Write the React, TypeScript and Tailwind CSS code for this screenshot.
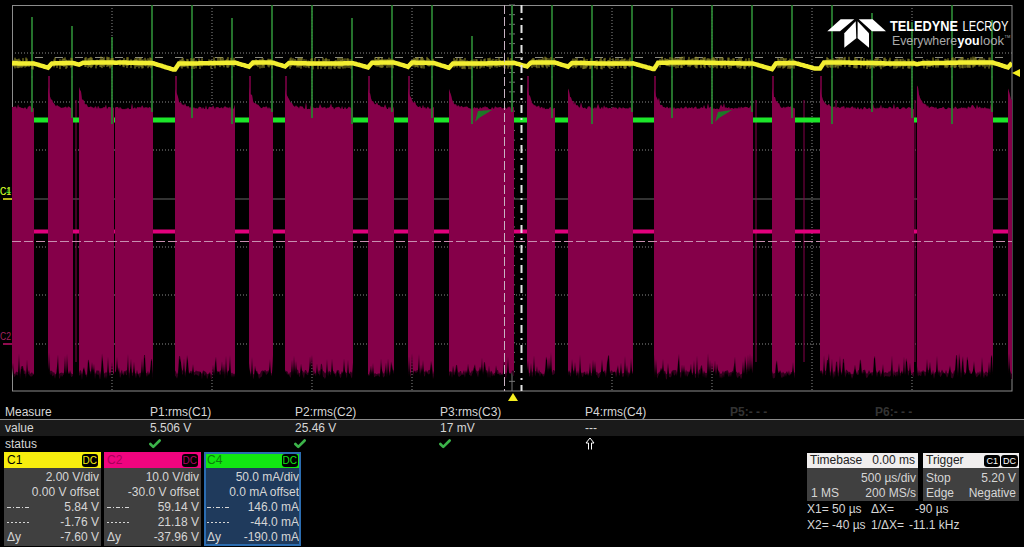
import { Check } from "lucide-react";

const bursts = [
  [12, 34], [48, 73], [79, 114], [115, 153], [175, 235], [249, 273], [285, 353], [368, 394],
  [408, 434], [449, 514], [527, 555], [568, 633], [654, 753], [772, 795], [820, 914], [917, 993], [1008, 1012],
];

const spikeTops = [17, 26, 37, 5, 5, 18, 5, 5, 18, 5, 5, 36, 5, 5, 5, 5, 8, 5, 5, 5, 5, 13, 22, 5, 20];

let seed = 1234;
function rnd() {
  seed = (seed * 1664525 + 1013904223) % 4294967296;
  return seed / 4294967296;
}

function makeBurst([x0, x1]: number[], i: number) {
  const tall = i === 0 || i === 3 ? 0 : 20;
  const top: string[] = [];
  const bottom: string[] = [];
  const tail: string[] = [];
  for (let x = x0; x <= x1; x++) {
    const jag = rnd() < 0.12 ? rnd() * 5 : 0;
    const t = 108 - tall * Math.exp(-(x - x0) / 4) + (rnd() - 0.5) * 3 - jag;
    top.push(`${x},${t.toFixed(1)}`);
    const up = rnd() < 0.22 ? 6 + rnd() * 12 : 0;
    const b = 372 + (rnd() - 0.5) * 5 - up;
    bottom.unshift(`${x},${b.toFixed(1)}`);
    tail.unshift(`${x},${(b + rnd() * 6).toFixed(1)}`);
  }
  return { main: [...top, ...bottom].join(" "), tail: [...top, ...tail].join(" ") };
}

const shapes = bursts.map(makeBurst);
const gaps = bursts.slice(0, -1).map((b, i) => [b[1], bursts[i + 1][0]]);

// yellow trace sags while the burst is off and snaps back when it starts
function makeYellow() {
  const pts: string[] = [];
  const noise: string[] = [];
  for (let x = 12; x <= 1012; x += 1) {
    const gap = gaps.find((g) => x >= g[0] && x <= g[1] + 4);
    let y = 63 + Math.sin(x / 23) * 0.5;
    if (gap) {
      const run = Math.min(x, gap[1]) - gap[0];
      y += Math.min(run * 0.3, 6);
      if (x > gap[1]) y -= ((x - gap[1]) / 4) * Math.min((gap[1] - gap[0]) * 0.3, 6);
    }
    pts.push(`${x},${y.toFixed(1)}`);
    if (!gap && rnd() < 0.7) {
      noise.push(`M${x} ${(y - 2 - rnd() * 4).toFixed(1)}V${(y + 2 + rnd() * 4).toFixed(1)}`);
    }
  }
  return { line: pts.join(" "), noise: noise.join("") };
}
const yellow = makeYellow();

const hGrid = [53, 102, 150, 247, 295, 344];
const vGrid = [112, 212, 312, 412, 612, 712, 812, 912];
const ticks = Array.from({ length: 40 }, (_, i) => 5 + i * 9.65);

function Scope() {
  return (
    <svg width="1024" height="404" viewBox="0 0 1024 404" className="block">
      <defs>
        <filter id="soft" x="0" y="0" width="1" height="1">
          <feGaussianBlur stdDeviation="0.45" />
        </filter>
      </defs>
      {hGrid.map((y) => (
        <line key={y} x1="12" x2="1012" y1={y} y2={y} stroke="#8a8a8a" strokeDasharray="1 2" />
      ))}
      <line x1="12" x2="1012" y1="199" y2="199" stroke="#666" />
      {vGrid.map((x) => (
        <line key={x} x1={x} x2={x} y1="5" y2="391" stroke="#8a8a8a" strokeDasharray="1 2" />
      ))}
      {Array.from({ length: 25 }, (_, i) => (
        <line key={i} x1={32 + i * 40} x2={32 + i * 40} y1="76" y2="78" stroke="#666" />
      ))}
      <line x1="35" x2="1012" y1="57.5" y2="57.5" stroke="#8b8b80" strokeDasharray="8 12" />
      <line x1="512" x2="512" y1="5" y2="391" stroke="#777" />
      {ticks.map((y) => (
        <line key={y} x1="509" x2="515" y1={y} y2={y} stroke="#777" />
      ))}
      <rect x="12.5" y="5.5" width="999.5" height="385.5" fill="none" stroke="#8c8c8c" />

      <g filter="url(#soft)">
        {shapes.map((s, i) => (
          <polygon key={i} points={s.tail} fill="#33001d" />
        ))}
        {shapes.map((s, i) => (
          <polygon key={i} points={s.main} fill="#85004a" />
        ))}
        {[48, 175, 249, 285, 368, 408, 527, 654, 772, 820].map((x) => (
          <line key={x} x1={x + 1} x2={x + 1} y1="76" y2="108" stroke="#85004a" strokeWidth="1.5" />
        ))}
        {[76, 232, 756, 804, 836, 915].map((x) => (
          <line key={x} x1={x} x2={x} y1="100" y2="362" stroke="#85004a" />
        ))}

        {spikeTops.map((top, i) => (
          <line key={i} x1={32 + i * 40} x2={32 + i * 40} y1={top} y2={112 + (i % 3) * 6} stroke="#2a7f30" strokeWidth="1.8" />
        ))}
        <polygon points="475,122 478,111 492,110 479,118" fill="#1f7a28" />
        <polygon points="715,122 718,112 732,110 719,118" fill="#1f7a28" />
        {gaps.map((g) => (
          <g key={g[0]}>
            <rect x={g[0]} y="117.5" width={g[1] - g[0]} height="5" fill="#1fe62a" />
            <rect x={g[0]} y="229.5" width={g[1] - g[0]} height="4" fill="#e0007c" />
          </g>
        ))}

        <path d={yellow.noise} stroke="#98932c" strokeWidth="1" fill="none" />
        <polyline points={yellow.line} fill="none" stroke="#f2ee30" strokeWidth="4.5" />
      </g>

      <line x1="12" x2="1012" y1="241.5" y2="241.5" stroke="#c88fb0" strokeDasharray="9 3" />
      <line x1="504.5" x2="504.5" y1="5" y2="391" stroke="#c9b4c4" strokeDasharray="9 3" />
      <line x1="521.5" x2="521.5" y1="5" y2="391" stroke="#e6e6e6" strokeWidth="2" strokeDasharray="8 5 2 5" />

      <polygon points="508,401 518,401 513,393" fill="#f5ee20" />
      <polygon points="1012,73 1020,69 1020,77" fill="#f5ee20" />

      <text x="0" y="195" fontSize="10" textLength="11" lengthAdjust="spacingAndGlyphs" fill="#1fd02a">C4</text>
      <text x="0" y="195" fontSize="10" textLength="11" lengthAdjust="spacingAndGlyphs" fill="#e6e620">C1</text>
      <line x1="3" x2="12" y1="199" y2="199" stroke="#f5ee20" strokeWidth="1.5" />
      <text x="0" y="340" fontSize="10" textLength="11" lengthAdjust="spacingAndGlyphs" fill="#a0205f">C2</text>
      <line x1="3" x2="12" y1="344" y2="344" stroke="#c0106a" strokeWidth="1.5" />

      <g fill="#fff">
        <polygon points="827.3,31.2 840.7,19.3 854.3,19.3 840,31.2" />
        <polygon points="844.3,33.3 855.7,21.3 856.3,38.3 844.3,47.7" />
        <polygon points="857.6,21.3 869,33.3 869,47.7 857.6,38.3" />
        <polygon points="858.7,19.3 872.7,19.3 886,31.2 872,31.2" />
        <text x="890" y="30.5" fontSize="14" fontWeight="bold" textLength="68" lengthAdjust="spacingAndGlyphs">TELEDYNE</text>
        <text x="962.5" y="30.5" fontSize="14" textLength="46" lengthAdjust="spacingAndGlyphs">LECROY</text>
        <text x="892" y="44.5" fontSize="12" fill="#aaaaaa" textLength="65" lengthAdjust="spacingAndGlyphs">Everywhere</text>
        <text x="957.5" y="44.5" fontSize="12" fontWeight="bold" textLength="22" lengthAdjust="spacingAndGlyphs">you</text>
        <text x="980" y="44.5" fontSize="12" fill="#aaaaaa" textLength="24" lengthAdjust="spacingAndGlyphs">look</text>
        <text x="1004.5" y="38" fontSize="4" fill="#aaaaaa">TM</text>
      </g>
    </svg>
  );
}

const measures = [
  { name: "P1:rms(C1)", value: "5.506 V", ok: true },
  { name: "P2:rms(C2)", value: "25.46 V", ok: true },
  { name: "P3:rms(C3)", value: "17 mV", ok: true },
  { name: "P4:rms(C4)", value: "---", up: true },
  { name: "P5:- - -", dim: true },
  { name: "P6:- - -", dim: true },
];

function MeasureTable() {
  return (
    <div className="text-[12px] leading-[17px] text-[#d6d6d6]">
      <div className="flex h-[16px] border-b border-[#8a8a8a]">
        <div className="w-[150px] pl-[5px]">Measure</div>
        {measures.map((m) => (
          <div key={m.name} className={m.dim ? "w-[145px] font-bold text-[#333333]" : "w-[145px]"}>
            {m.name}
          </div>
        ))}
      </div>
      <div className="flex h-[16px] bg-[#1a1a1a]">
        <div className="w-[150px] pl-[5px]">value</div>
        {measures.map((m) => (
          <div key={m.name} className="w-[145px]">
            {m.value}
          </div>
        ))}
      </div>
      <div className="flex h-[15px]">
        <div className="w-[150px] pl-[5px]">status</div>
        {measures.map((m) => (
          <div key={m.name} className="w-[145px]">
            {m.ok && <Check size={14} strokeWidth={4.5} className="ml-[-2px] mt-[1px] text-[#3cb44a]" />}
            {m.up && (
              <svg width="10" height="13" viewBox="0 0 10 13" className="mt-[1px]" fill="none" stroke="#fff">
                <path d="M3.5 12.5V6H1L5 1l4 5H6.500V12.500" />
              </svg>
            )}
          </div>
        ))}
      </div>
    </div>
  );
}

function LineKey({ dash }: { dash: string }) {
  return (
    <svg width="22" height="3" className="block">
      <line x1="0" x2="22" y1="1.5" y2="1.5" stroke="#d6d6d6" strokeDasharray={dash} />
    </svg>
  );
}

const channels = [
  {
    name: "C1",
    head: "bg-[#f7ee0e] text-black",
    badge: "text-[#f7ee0e]",
    body: "bg-[#404040]",
    rows: ["2.00 V/div", "0.00 V offset", "5.84 V", "-1.76 V", "-7.60 V"],
  },
  {
    name: "C2",
    head: "bg-[#f0047f] text-[#a8005a]",
    badge: "text-[#b00060]",
    body: "bg-[#404040]",
    rows: ["10.0 V/div", "-30.0 V offset", "59.14 V", "21.18 V", "-37.96 V"],
  },
  {
    name: "C4",
    head: "bg-[#12e612] text-[#0a800a]",
    badge: "text-[#12e612]",
    body: "bg-[#1f3a5c] outline-2 -outline-offset-2 outline-[#2b6cb0]",
    rows: ["50.0 mA/div", "0.0 mA offset", "146.0 mA", "-44.0 mA", "-190.0 mA"],
  },
];

function ChannelCard({ ch }: { ch: (typeof channels)[number] }) {
  return (
    <div className={`h-[94px] w-[97px] ${ch.body}`}>
      <div className={`flex h-[16px] items-center justify-between px-[3px] text-[12px] ${ch.head}`}>
        <span>{ch.name}</span>
        <span className={`rounded-[3px] bg-black px-[1px] text-[10px] leading-[13px] ${ch.badge}`}>DC</span>
      </div>
      <div className="pt-[2px] text-[12px] leading-[15px] text-[#d6d6d6]">
        {ch.rows.map((r, i) => (
          <div key={r} className="flex h-[15px] items-center justify-between pl-[3px] pr-[2px]">
            <span>
              {i === 2 && <LineKey dash="4 2 1 2" />}
              {i === 3 && <LineKey dash="2 2" />}
              {i === 4 && "Δy"}
            </span>
            <span>{r}</span>
          </div>
        ))}
      </div>
    </div>
  );
}

function RightPanels() {
  return (
    <div className="ml-auto w-[217px] pr-[5px] pt-[2px] text-[12px] leading-[15px] text-[#d6d6d6]">
      <div className="flex gap-[5px]">
        <div className="w-[111px] bg-[#404040]">
          <div className="flex h-[15px] justify-between bg-[#f0eeee] px-[3px] text-[#222222]">
            <span>Timebase</span>
            <span>0.00 ms</span>
          </div>
          <div className="flex h-[18px] items-end justify-end pr-[2px]">500 µs/div</div>
          <div className="flex h-[15px] justify-between pl-[4px] pr-[2px]">
            <span>1 MS</span>
            <span>200 MS/s</span>
          </div>
        </div>
        <div className="w-[96px] bg-[#404040]">
          <div className="flex h-[15px] items-center justify-between bg-[#f0eeee] pl-[3px] pr-[1px] text-[#222222]">
            <span>Trigger</span>
            <span className="flex gap-[1px] text-[9px] leading-[12px] text-white">
              <span className="rounded-[3px] bg-black px-[2px]">C1</span>
              <span className="rounded-[3px] bg-black px-[2px]">DC</span>
            </span>
          </div>
          <div className="flex h-[18px] items-end justify-between px-[3px]">
            <span>Stop</span>
            <span>5.20 V</span>
          </div>
          <div className="flex h-[15px] justify-between px-[3px]">
            <span>Edge</span>
            <span>Negative</span>
          </div>
        </div>
      </div>
      <div className="flex h-[16px] items-end">
        <span className="w-[64px]">X1= 50 µs</span>
        <span className="w-[38px]">ΔX=</span>
        <span className="pl-[6px]">-90 µs</span>
      </div>
      <div className="flex h-[16px] items-end">
        <span className="w-[64px]">X2= -40 µs</span>
        <span className="w-[38px] whitespace-nowrap">1/ΔX=</span>
        <span>-11.1 kHz</span>
      </div>
    </div>
  );
}

export default function App() {
  return (
    <div className="h-[547px] w-[1024px] overflow-hidden bg-black [font-family:'Liberation_Sans',Arial,sans-serif]">
      <Scope />
      <MeasureTable />
      <div className="flex">
        <div className="flex gap-[3px] pl-[4px] pt-[1px]">
          {channels.map((ch) => (
            <ChannelCard key={ch.name} ch={ch} />
          ))}
        </div>
        <RightPanels />
      </div>
    </div>
  );
}
